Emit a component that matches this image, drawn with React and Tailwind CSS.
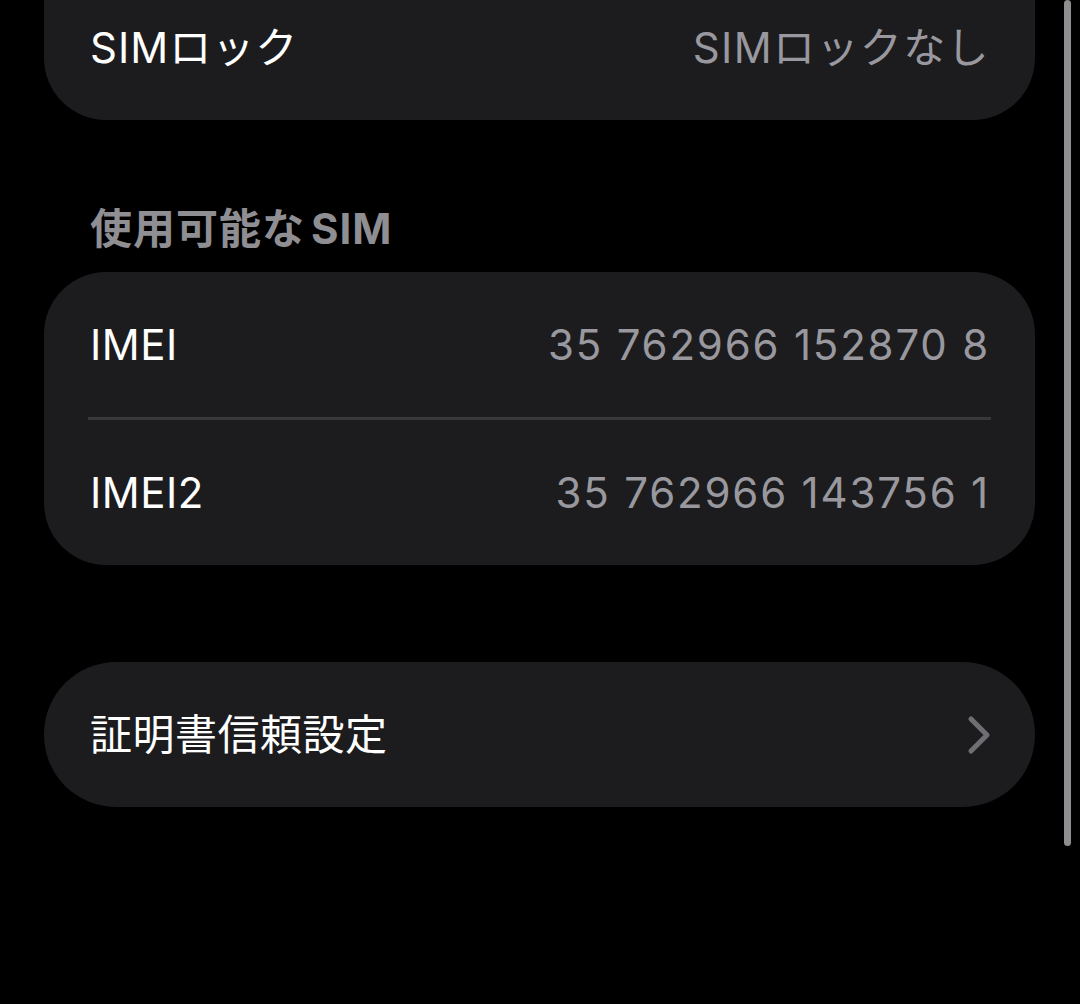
import { ChevronRight } from "lucide-react";

const font = { fontFamily: '"Inter", "Noto Sans CJK JP", sans-serif' };

const Row = ({ label, value, children }) => (
  <div className="flex h-[145px] items-center justify-between pl-[46px] pr-[45px]">
    <span className="text-[42px] tracking-[0.5px] text-white">{label}</span>
    {value && <span className="text-[42px] tracking-[1.8px] text-[#98989e]">{value}</span>}
    {children}
  </div>
);

export default function App() {
  return (
    <div className="relative h-[1004px] w-[1080px] overflow-hidden bg-black" style={font}>
      {/* scrollbar */}
      <div className="absolute right-[9px] top-0 h-[846px] w-[7px] rounded-full bg-[#8e8e90]" />

      <div className="flex w-[1035px] flex-col pl-[44px]">
        {/* top card, cut off */}
        <div className="flex h-[120px] items-start rounded-b-[62px] bg-[#1c1c1e]">
          <div className="flex h-[94px] w-full items-center justify-between pl-[46px] pr-[45px]">
            <span className="text-[42px] tracking-[1px] text-white">SIMロック</span>
            <span className="text-[42px] tracking-[1.4px] text-[#98989e]">SIMロックなし</span>
          </div>
        </div>

        <h2 className="mt-[84px] h-[68px] pl-[46px] text-[42px] font-bold leading-[50px] tracking-[1px] text-[#8e8e93]">
          使用可能な<span className="ml-[6px]">SIM</span>
        </h2>

        <div className="rounded-[62px] bg-[#1c1c1e]">
          <Row label="IMEI" value="35 762966 152870 8" />
          <div className="mx-[44px] h-[3px] bg-[#38383b]" />
          <Row label="IMEI2" value="35 762966 143756 1" />
        </div>

        <div className="mt-[97px] rounded-[72px] bg-[#1c1c1e]">
          <Row label="証明書信頼設定">
            <ChevronRight className="mr-[-21px] text-[#6e6e73]" size={64} strokeWidth={1.9} />
          </Row>
        </div>
      </div>
    </div>
  );
}
